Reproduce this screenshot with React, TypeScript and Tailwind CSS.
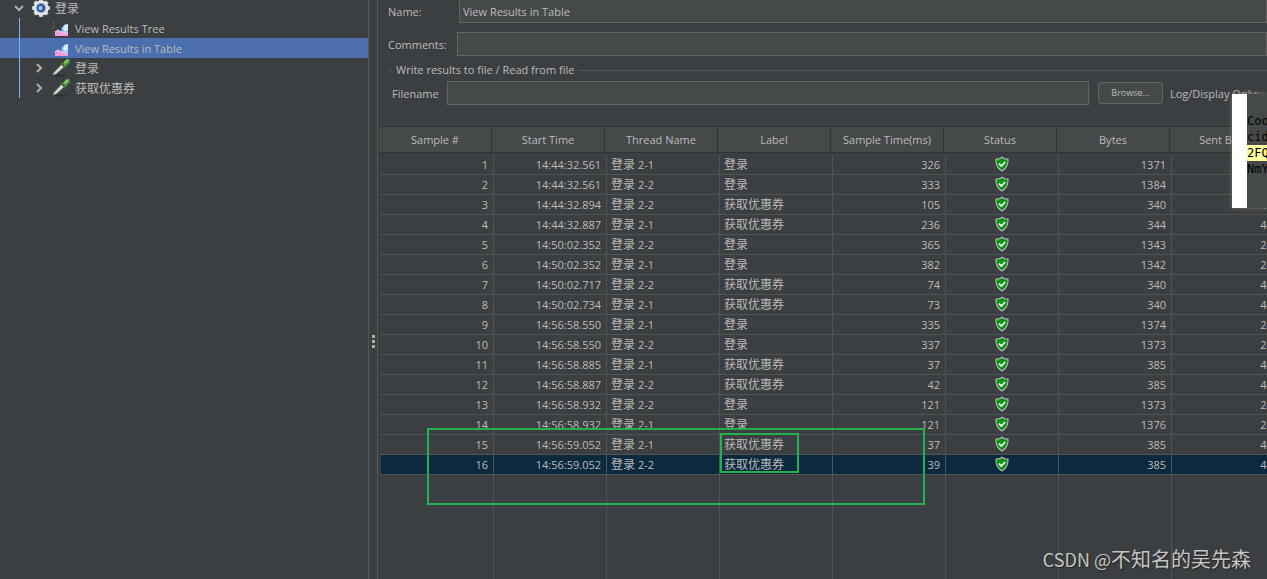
import React from 'react';

interface Sample {
  id: number;
  start: string;
  thread: string;
  label: string;
  time: number;
  bytes: number;
  sent: number;
}

const LOGIN = '登录';
const COUPON = '获取优惠券';

const samples: Sample[] = [
  { id: 1, start: '14:44:32.561', thread: '2-1', label: LOGIN, time: 326, bytes: 1371, sent: 243 },
  { id: 2, start: '14:44:32.561', thread: '2-2', label: LOGIN, time: 333, bytes: 1384, sent: 243 },
  { id: 3, start: '14:44:32.894', thread: '2-2', label: COUPON, time: 105, bytes: 340, sent: 467 },
  { id: 4, start: '14:44:32.887', thread: '2-1', label: COUPON, time: 236, bytes: 344, sent: 467 },
  { id: 5, start: '14:50:02.352', thread: '2-2', label: LOGIN, time: 365, bytes: 1343, sent: 243 },
  { id: 6, start: '14:50:02.352', thread: '2-1', label: LOGIN, time: 382, bytes: 1342, sent: 243 },
  { id: 7, start: '14:50:02.717', thread: '2-2', label: COUPON, time: 74, bytes: 340, sent: 467 },
  { id: 8, start: '14:50:02.734', thread: '2-1', label: COUPON, time: 73, bytes: 340, sent: 467 },
  { id: 9, start: '14:56:58.550', thread: '2-1', label: LOGIN, time: 335, bytes: 1374, sent: 243 },
  { id: 10, start: '14:56:58.550', thread: '2-2', label: LOGIN, time: 337, bytes: 1373, sent: 243 },
  { id: 11, start: '14:56:58.885', thread: '2-1', label: COUPON, time: 37, bytes: 385, sent: 467 },
  { id: 12, start: '14:56:58.887', thread: '2-2', label: COUPON, time: 42, bytes: 385, sent: 467 },
  { id: 13, start: '14:56:58.932', thread: '2-2', label: LOGIN, time: 121, bytes: 1373, sent: 243 },
  { id: 14, start: '14:56:58.932', thread: '2-1', label: LOGIN, time: 121, bytes: 1376, sent: 243 },
  { id: 15, start: '14:56:59.052', thread: '2-1', label: COUPON, time: 37, bytes: 385, sent: 467 },
  { id: 16, start: '14:56:59.052', thread: '2-2', label: COUPON, time: 39, bytes: 385, sent: 467 },
];

const columns = [
  'Sample #',
  'Start Time',
  'Thread Name',
  'Label',
  'Sample Time(ms)',
  'Status',
  'Bytes',
  'Sent Bytes',
];

// Body grid lines sit 2px to the right of the header separators
const gridLine = 'bg-[linear-gradient(to_right,transparent_2px,#505354_2px,#505354_3px,transparent_3px)]';

function Chevron({ open = false }: { open?: boolean }) {
  return (
    <svg className="block h-3 w-3" viewBox="0 0 12 12" fill="none" stroke="#adadad" strokeWidth="2">
      <path d={open ? 'M2 4l4 4 4-4' : 'M4 2l4 4-4 4'} />
    </svg>
  );
}

function GearIcon() {
  return (
    <svg className="block h-5 w-5" viewBox="0 0 20 20">
      {[0, 45, 90, 135].map((a) => (
        <rect key={a} x="8" y="1" width="4" height="18" rx="1" fill="#cfd4d8" transform={`rotate(${a} 10 10)`} />
      ))}
      <circle cx="10" cy="10" r="7.500" fill="#e4e7ea" />
      <circle cx="10" cy="10" r="5" fill="#8b97a6" />
      <circle cx="10" cy="10" r="4" fill="#2c5ea8" />
      <circle cx="9.500" cy="10" r="2" fill="#a9c8ee" />
    </svg>
  );
}

function ChartIcon() {
  return (
    <svg className="block h-5 w-5" viewBox="0 0 20 20">
      <path d="M2.500 3v14.500h15" fill="none" stroke="#676b70" strokeWidth="1" strokeDasharray="1 1" />
      <path d="M10.500 16v-6l3-3.500L17 6v10z" fill="#8dbcf2" />
      <path d="M12 11l1.500-3.500L17 6v5l-2.500 3z" fill="#dcebfb" />
      <path d="M4 18v-4l3-2 2.500 1.500 3 1 2.500 1 2-1.500V18z" fill="#f19bd8" />
      <path d="M4 14l3-2 2.500 1.500 3 1 2.500 1 2-1.500" fill="none" stroke="#fbdcf2" strokeWidth="1" />
    </svg>
  );
}

function PipetteIcon() {
  return (
    <svg className="block h-5 w-5" viewBox="0 0 20 20">
      <ellipse cx="9" cy="17.500" rx="7" ry="1" fill="#2d2f31" />
      <path d="M2 17l1-2.500L11 6l2.500 2.500L5 16z" fill="#c9cccb" stroke="#8b8f8e" strokeWidth=".6" />
      <path d="M4.500 15L12 7.500" stroke="#f4f6f5" strokeWidth="1" />
      <path d="M10 5l5 5" stroke="#3c6e2b" strokeWidth="2" />
      <path d="M11.500 5.500l3.500-4q2-1.500 3.300 0t0 3.300L14.500 8.500z" fill="#57a23c" />
      <path d="M13.500 5L16.500 2" stroke="#a9dc8f" strokeWidth="1.200" />
    </svg>
  );
}

function ShieldIcon() {
  return (
    <svg className="block h-4 w-4" viewBox="0 0 16 16" role="img" aria-label="Success">
      <path d="M8 .5c1.800 1.500 3.800 2.200 6.500 2.200.3 5.800-1.600 10-6.500 12.800C3.100 12.700 1.200 8.500 1.500 2.700 4.200 2.700 6.200 2 8 .5z" fill="#c3c8c3" />
      <path d="M8 2.200c1.500 1 3.100 1.600 5.200 1.700 0 4.600-1.500 7.700-5.200 10.100-3.700-2.400-5.200-5.500-5.200-10.100C4.900 3.800 6.500 3.200 8 2.200z" fill="#0a9a12" stroke="#0b6a10" strokeWidth=".5" />
      <path d="M5 7.700l2.300 2.300L11.200 6" fill="none" stroke="#fff" strokeWidth="1.700" />
    </svg>
  );
}

interface TreeItemProps {
  icon: React.ReactNode;
  label: string;
  selected?: boolean;
  cjk?: boolean;
  branch?: boolean;
}

function TreeItem({ icon, label, selected = false, cjk = false, branch = false }: TreeItemProps) {
  return (
    <li
      role="treeitem"
      aria-selected={selected}
      className={`flex h-5 items-center pl-[33px] ${selected ? 'bg-[#4b6eaf]' : ''}`}
    >
      <span className="w-[18px]">{branch && <Chevron />}</span>
      {icon}
      <span className={`pt-0.5 pl-1 ${cjk ? 'text-[12px]' : ''}`}>{label}</span>
    </li>
  );
}

function TestPlanTree() {
  return (
    <aside className="w-[369px] shrink-0 border-r border-[#555758]">
      <ul role="tree" className="relative -mt-0.5">
        <li role="treeitem" aria-expanded className="flex h-5 items-center pl-[13px]">
          <span className="w-[18px]"><Chevron open /></span>
          <GearIcon />
          <span className="pt-0.5 pl-1 text-[12px]">{LOGIN}</span>
        </li>
        <TreeItem icon={<ChartIcon />} label="View Results Tree" />
        <TreeItem icon={<ChartIcon />} label="View Results in Table" selected />
        <TreeItem icon={<PipetteIcon />} label={LOGIN} cjk branch />
        <TreeItem icon={<PipetteIcon />} label={COUPON} cjk branch />
        <li role="none" className="absolute top-5 bottom-0 left-[19px] w-px bg-[#7ab4e8]" />
      </ul>
    </aside>
  );
}

function Splitter() {
  return (
    <div className="flex w-2 shrink-0 flex-col items-center justify-center gap-0.5 pt-[104px]">
      <span className="h-[3px] w-[3px] bg-[#adadad]" />
      <span className="h-[3px] w-[3px] bg-[#adadad]" />
      <span className="h-[3px] w-[3px] bg-[#adadad]" />
    </div>
  );
}

function ListenerForm() {
  const field = 'h-6 min-w-0 flex-1 border border-[#646464] bg-[#45494a] px-[3px] text-[#bbbbbb] outline-none';
  return (
    <form className="shrink-0">
      <div className="-mt-px flex items-center pl-2.5">
        <label htmlFor="name" className="w-[71px] pt-0.5">Name:</label>
        <input id="name" className={field} defaultValue="View Results in Table" />
      </div>
      <div className="mt-[9px] flex items-center pl-2.5">
        <label htmlFor="comments" className="w-[69px] pt-0.5">Comments:</label>
        <input id="comments" className={field} />
      </div>
      <fieldset className="mt-1.5 min-w-0">
        <legend className="flex h-4 w-full items-center gap-1 pl-3">
          <span className="-ml-px h-px w-[3px] bg-[#555758]" />
          Write results to file / Read from file
          <span className="h-px flex-1 bg-[#555758]" />
        </legend>
        <div className="mt-[3px] flex items-center pl-3.5">
          <label htmlFor="filename" className="w-[55px] pt-0.5">Filename</label>
          <input id="filename" className={field} />
          <button
            type="button"
            className="ml-[9px] h-[22px] w-[65px] rounded-[3px] border border-[#646769] bg-[#45494a] text-[9px]"
          >
            Browse...
          </button>
          <span className="w-[104px] pt-0.5 pl-[7px] whitespace-nowrap">Log/Display Only:</span>
        </div>
      </fieldset>
    </form>
  );
}

function ResultsTable() {
  return (
    <div className="mt-[21px] ml-px min-h-0 flex-1 overflow-hidden">
      <table className="h-full w-[903px] table-fixed border-separate border-spacing-0">
        <colgroup>
          <col className="w-[112px]" />
          {columns.slice(1).map((c) => (
            <col key={c} className="w-[113px]" />
          ))}
        </colgroup>
        <thead>
          <tr>
            {columns.map((c, i) => (
              <th
                key={c}
                className={`h-[27px] border-y border-[#313435] bg-[#45494a] p-0 font-normal ${i > 0 ? 'border-l' : ''}`}
              >
                {c}
              </th>
            ))}
          </tr>
        </thead>
        <tbody>
          <tr aria-hidden="true"><td colSpan={8} className="h-0.5 p-0" /></tr>
          {samples.map((s) => {
            const cell = `h-5 border-b border-[#505354] py-0 ${gridLine}`;
            return (
              <tr key={s.id} className={s.id === 16 ? 'bg-[#0d293e]' : ''}>
                <td className="h-5 border-b border-l-2 border-b-[#505354] border-l-[#3c3f41] py-0 pr-[3px] text-right">
                  {s.id}
                </td>
                <td className={`${cell} pr-[3px] text-right`}>{s.start}</td>
                <td className={`${cell} pl-[7px]`}>
                  <span className="text-[12px]">{LOGIN}</span> {s.thread}
                </td>
                <td className={`${cell} pl-[7px] text-[12px]`}>{s.label}</td>
                <td className={`${cell} pr-[3px] text-right`}>{s.time}</td>
                <td className={cell}>
                  <div className="flex justify-center pb-0.5 pl-1"><ShieldIcon /></div>
                </td>
                <td className={`${cell} pr-[3px] text-right`}>{s.bytes}</td>
                <td className={`${cell} pr-[3px] text-right`}>{s.sent}</td>
              </tr>
            );
          })}
          <tr aria-hidden="true">
            {columns.map((c, i) => (
              <td key={c} className={i > 0 ? gridLine : ''} />
            ))}
          </tr>
        </tbody>
      </table>
    </div>
  );
}

function CookiePopup() {
  return (
    <div className="absolute top-[94px] right-0 flex h-[114px] w-[35px] overflow-hidden shadow-[0_0_4px_#777]">
      <div className="w-[15px] shrink-0 bg-white" />
      <div className="flex-1 bg-[#45494a] pt-[19px] font-['DejaVu_Sans_Mono',monospace] text-[12px] leading-4 text-black">
        <p>Coo</p>
        <p>cid</p>
        <p className="bg-[#ffffa0]">2FQ</p>
        <p>NmY</p>
      </div>
    </div>
  );
}

export default function App() {
  return (
    <div className="relative flex h-screen overflow-hidden bg-[#3c3f41] font-['Open_Sans','Noto_Sans_CJK_SC',sans-serif] text-[11px] leading-4 text-[#bbbbbb]">
      <TestPlanTree />
      <Splitter />
      <main className="flex min-w-0 flex-1 flex-col border-l border-[#555758]">
        <ListenerForm />
        <ResultsTable />
      </main>

      <CookiePopup />

      {/* Highlighted samples */}
      <div className="absolute top-[428px] left-[427px] h-[77px] w-[498px] border-2 border-[#22b14c]" />
      <div className="absolute top-[433px] left-[720px] h-10 w-[79px] border-2 border-[#22b14c]" />

      <p className="absolute right-4 bottom-1.5 font-['Noto_Sans_CJK_SC',sans-serif] text-[20px] leading-7 text-[#c4c5c6] [text-shadow:1px_1px_1px_#222]">
        <span className="text-[18px]">CSDN @</span>不知名的吴先森
      </p>
    </div>
  );
}
